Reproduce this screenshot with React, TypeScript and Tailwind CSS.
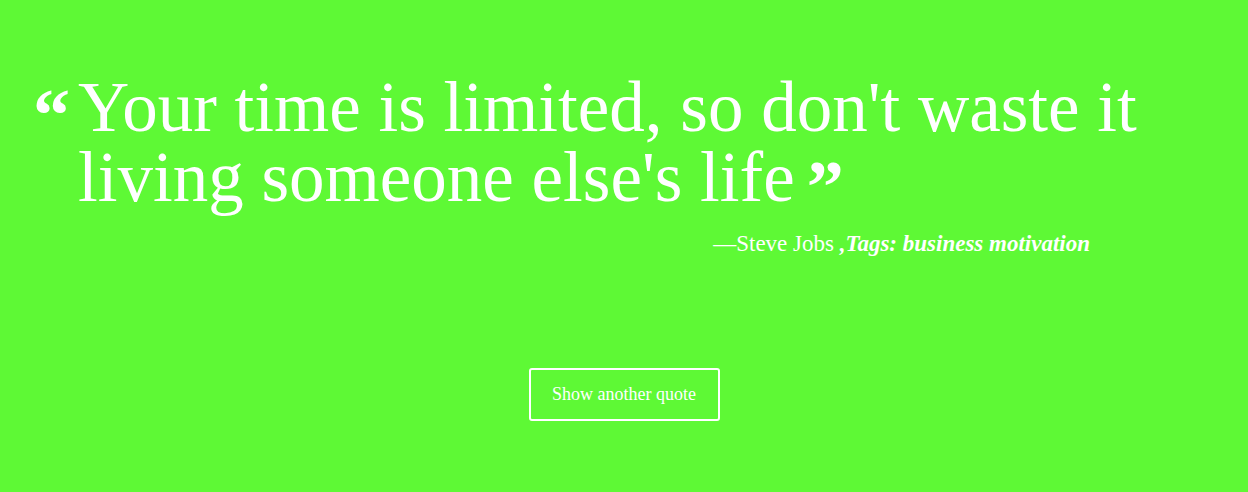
import React from 'react'

const serif = { fontFamily: '"Liberation Serif", "DejaVu Serif", serif' }

export default function App() {
  return (
    <div className="w-full h-[492px] bg-[#5ef935] text-white overflow-hidden" style={serif}>
      <div className="w-[1160px] pl-[33px] pt-[72px]">
        <div className="flex items-start">
          <span className="text-[74px] font-bold leading-none w-[45px] shrink-0 mt-[6px]">&ldquo;</span>
          <p className="text-[71px] leading-[70px] w-[1100px]">
            Your time is limited, so don't waste it living someone else's life
            <span className="text-[74px] font-bold leading-none align-top relative top-[8px] ml-[12px]">&rdquo;</span>
          </p>
        </div>
        <div className="text-right w-[1057px] mt-[11px] text-[23px]">
          <span>&mdash;Steve Jobs </span>
          <span className="font-bold italic">,Tags: business motivation</span>
        </div>
      </div>
      <div className="flex justify-center mt-[106px]">
        <button className="w-[191px] h-[53px] border-2 border-white rounded-[3px] text-[18px] text-white">
          Show another quote
        </button>
      </div>
    </div>
  )
}
